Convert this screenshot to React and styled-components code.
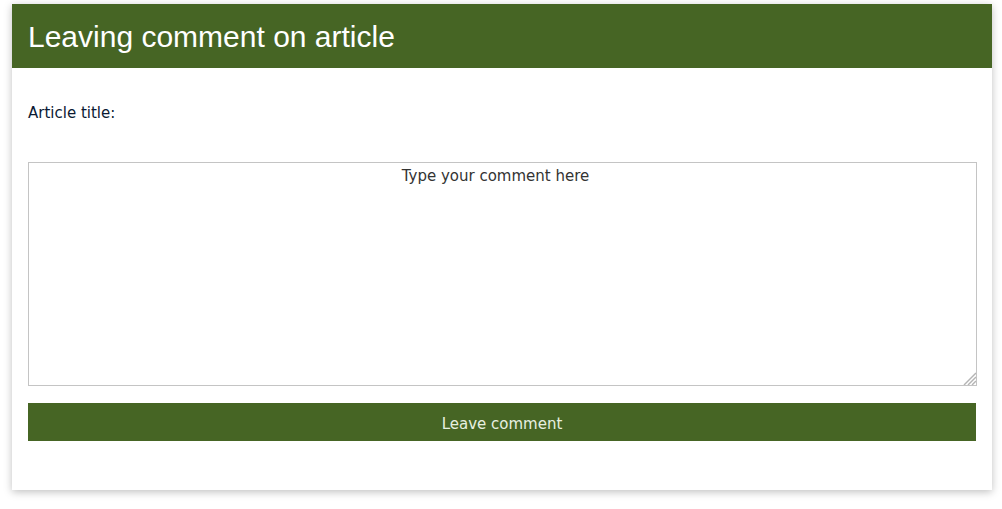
import React from 'react'
import styled, { createGlobalStyle } from 'styled-components'

const GlobalStyle = createGlobalStyle`
    html, body {
        margin: 0;
        background: #ffffff;
        min-height: 100%;
    }
    body {
        padding-bottom: 18px;
    }
`

const Card = styled.div`
    width: 980px;
    margin: 4px 0 0 12px;
    background: #fff;
    box-shadow: 0 2px 8px rgba(0, 0, 0, 0.25);
    padding-bottom: 49px;
`

const Header = styled.div`
    background: #466524;
    height: 64px;
    display: flex;
    align-items: center;
    padding: 1px 16px 0;
    box-sizing: border-box;
`

const Title = styled.h1`
    margin: 0;
    font-family: "Liberation Sans", Arial, sans-serif;
    font-weight: normal;
    font-size: 30px;
    color: #ffffff;
`

const Form = styled.form`
    display: flex;
    flex-direction: column;
    padding: 0 16px;
`

const Label = styled.p`
    margin: 36px 0 40px;
    font-family: "DejaVu Sans", Verdana, sans-serif;
    font-size: 15px;
    color: #0a1a33;
`

const BoxWrap = styled.div`
    position: relative;
    width: 949px;
    height: 224px;
`

const CommentBox = styled.textarea`
    box-sizing: border-box;
    width: 100%;
    height: 100%;
    display: block;
    border: 1px solid #c4c4c4;
    padding: 4px 18px 4px 4px;
    font-family: "DejaVu Sans", Verdana, sans-serif;
    font-size: 15px;
    color: #333;
    text-align: center;
    resize: none;
    outline: none;
`

const Grip = styled.svg`
    position: absolute;
    right: 1px;
    bottom: 1px;
    pointer-events: none;
`

const Button = styled.button`
    margin-top: 17px;
    width: 948px;
    height: 38px;
    border: none;
    padding-top: 4px;
    background: #466524;
    color: #e8f0e0;
    font-family: "DejaVu Sans", Verdana, sans-serif;
    font-size: 15px;
    cursor: pointer;
`

const App = () => {
    return (
        <>
            <GlobalStyle />
            <Card>
                <Header>
                    <Title>Leaving comment on article</Title>
                </Header>
                <Form onSubmit={(e) => e.preventDefault()}>
                    <Label>Article title:</Label>
                    <BoxWrap>
                        <CommentBox defaultValue="Type your comment here" />
                        {/* resize grip */}
                        <Grip width="13" height="13" viewBox="0 0 13 13">
                            <g stroke="#b4b4b4" strokeWidth="1.4">
                                <line x1="1" y1="13" x2="13" y2="1" />
                                <line x1="5" y1="13" x2="13" y2="5" />
                                <line x1="9" y1="13" x2="13" y2="9" />
                            </g>
                        </Grip>
                    </BoxWrap>
                    <Button type="submit">Leave comment</Button>
                </Form>
            </Card>
        </>
    )
}

export default App
